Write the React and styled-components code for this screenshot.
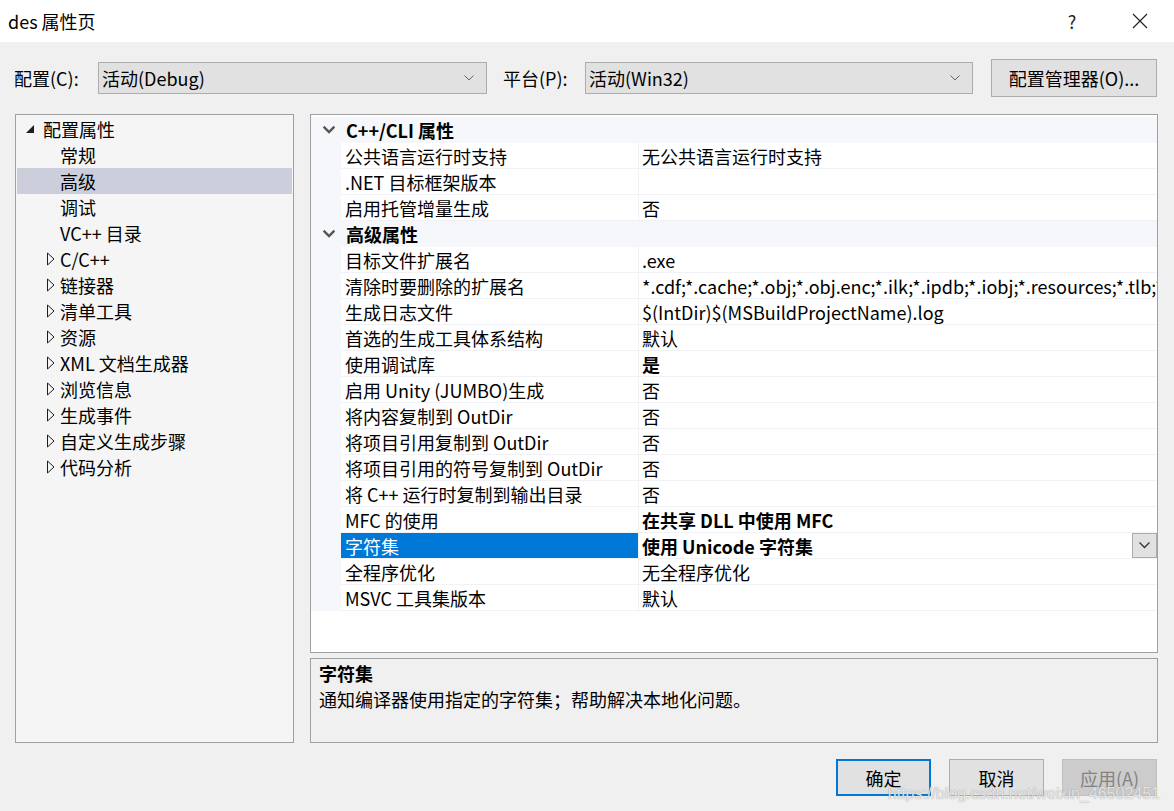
import React from "react";
import styled, { createGlobalStyle } from "styled-components";

const GlobalStyle = createGlobalStyle`
  html, body {
    margin: 0;
    padding: 0;
    background: #f0f0f0;
  }
  body {
    font-family: "Noto Sans CJK SC", "Noto Sans", sans-serif;
    font-size: 18px;
    color: #000;
  }
`;

const Window = styled.div`
  position: relative;
  width: 1174px;
  height: 811px;
  display: flex;
  flex-direction: column;
  background: #f0f0f0;
  overflow: hidden;
`;

const TitleBar = styled.div`
  height: 42px;
  display: flex;
  align-items: center;
  justify-content: space-between;
  background: #fff;
  padding-left: 8px;
`;

const Title = styled.div`
  font-size: 18px;
  line-height: 24px;
`;

const TitleButtons = styled.div`
  display: flex;
  align-items: center;
  height: 100%;
`;

const TitleButton = styled.div`
  width: 52px;
  height: 100%;
  display: flex;
  align-items: center;
  justify-content: center;
  font-size: 18px;
  color: #222;
  margin-right: ${(p) => p.$mr || 0}px;
`;

const Toolbar = styled.div`
  height: 72px;
  display: flex;
  align-items: center;
  padding-left: 14px;
`;

const Label = styled.div`
  line-height: 24px;
  width: ${(p) => p.$w}px;
`;

const Select = styled.div`
  width: ${(p) => p.$w}px;
  height: 32px;
  box-sizing: border-box;
  border: 1px solid #adadad;
  background: #e1e1e1;
  display: flex;
  align-items: center;
  justify-content: space-between;
  padding: 0 12px 0 3px;
  margin-right: ${(p) => p.$mr || 0}px;
  line-height: 24px;
`;

const Button = styled.div`
  flex: none;
  width: ${(p) => p.$w || 95}px;
  height: ${(p) => p.$h || 37}px;
  box-sizing: border-box;
  display: flex;
  align-items: center;
  justify-content: center;
  background: ${(p) => (p.$disabled ? "#cccccc" : "#e1e1e1")};
  color: ${(p) => (p.$disabled ? "#838383" : "#000")};
  border: ${(p) =>
    p.$primary ? "2px solid #0078d7" : p.$disabled ? "1px solid #bfbfbf" : "1px solid #adadad"};
  line-height: 24px;
`;

const Content = styled.div`
  height: 629px;
  display: flex;
  gap: 16px;
  padding: 0 16px 0 15px;
`;

const TreePanel = styled.div`
  flex: none;
  width: 279px;
  box-sizing: border-box;
  border: 1px solid #a0a0a0;
  background: #f5f5f5;
  padding-top: 1px;
  white-space: nowrap;
`;

const TreeItem = styled.div`
  height: 26px;
  display: flex;
  align-items: center;
  line-height: 24px;
  padding-left: ${(p) => p.$indent}px;
  margin: 0 1px;
  background: ${(p) => (p.$selected ? "#cccedb" : "transparent")};
`;

const Expander = styled.span`
  flex: none;
  width: ${(p) => p.$w}px;
  display: inline-flex;
  align-items: center;
`;

const RightColumn = styled.div`
  flex: 1;
  min-width: 0;
  display: flex;
  flex-direction: column;
  gap: 5px;
`;

const Grid = styled.div`
  height: 539px;
  box-sizing: border-box;
  border: 1px solid #a0a0a0;
  background: #fff;
  padding-top: 2px;
  overflow: hidden;
`;

const CategoryRow = styled.div`
  height: 26px;
  display: flex;
  align-items: center;
  background: #f5f7fa;
  font-weight: bold;
  line-height: 24px;
`;

const CategoryToggle = styled.span`
  width: 35px;
  display: inline-flex;
  justify-content: center;
  align-items: center;
`;

const PropRow = styled.div`
  height: 26px;
  display: flex;
  background: #f5f7fa;
`;

const NameCell = styled.div`
  flex: none;
  width: 298px;
  margin-left: 30px;
  box-sizing: border-box;
  padding-left: 4px;
  display: flex;
  align-items: center;
  line-height: 24px;
  white-space: nowrap;
  border-bottom: 1px solid #f0f2f6;
  border-right: 1px solid #f0f2f6;
  background: ${(p) => (p.$selected ? "#0078d7" : "#fff")};
  color: ${(p) => (p.$selected ? "#fff" : "#000")};
`;

const ValueCell = styled.div`
  flex: 1;
  min-width: 0;
  box-sizing: border-box;
  padding-left: 3px;
  display: flex;
  align-items: center;
  justify-content: space-between;
  line-height: 24px;
  white-space: nowrap;
  overflow: hidden;
  background: #fff;
  border-bottom: 1px solid #f0f2f6;
  font-weight: ${(p) => (p.$bold ? "bold" : "normal")};
`;

const ValueText = styled.span`
  overflow: hidden;
  min-width: 0;
`;

const DropButton = styled.div`
  flex: none;
  width: 25px;
  height: 25px;
  box-sizing: border-box;
  border: 1px solid #adadad;
  background: #e1e1e1;
  display: flex;
  align-items: center;
  justify-content: center;
`;

const Description = styled.div`
  flex: 1;
  box-sizing: border-box;
  border: 1px solid #a0a0a0;
  background: #f0f0f0;
  padding: 1px 8px;
  line-height: 26px;
`;

const DescTitle = styled.div`
  font-weight: bold;
`;

const Footer = styled.div`
  flex: 1;
  display: flex;
  justify-content: flex-end;
  align-items: flex-start;
  gap: 18px;
  padding: 16px 17px 0 0;
`;

const Watermark = styled.div`
  position: absolute;
  right: 14px;
  bottom: 8px;
  font-family: "Liberation Sans", Arial, sans-serif;
  font-size: 16px;
  color: rgba(240, 240, 240, 0.9);
  text-shadow: 0 0 1px rgba(100, 100, 100, 0.7);
  pointer-events: none;
`;

const Chevron = ({ size = 10, color = "#444", width = 1.2 }) => (
  <svg width={size} height={size * 0.6} viewBox="0 0 10 6">
    <polyline points="0.5,0.5 5,5 9.5,0.5" fill="none" stroke={color} strokeWidth={width} />
  </svg>
);

const CloseIcon = () => (
  <svg width="16" height="16" viewBox="0 0 16 16">
    <path d="M1 1 L15 15 M15 1 L1 15" stroke="#222" strokeWidth="1.2" />
  </svg>
);

const ExpandedArrow = () => (
  <svg width="10" height="10" viewBox="0 0 10 10">
    <polygon points="9,1 9,9 1,9" fill="#1e1e1e" />
  </svg>
);

const CollapsedArrow = () => (
  <svg width="8" height="14" viewBox="0 0 8 14">
    <polygon points="0.5,1 7,7 0.5,13" fill="none" stroke="#1e1e1e" strokeWidth="1" />
  </svg>
);

const treeItems = [
  { label: "配置属性", level: 0, expanded: true },
  { label: "常规", level: 1 },
  { label: "高级", level: 1, selected: true },
  { label: "调试", level: 1 },
  { label: "VC++ 目录", level: 1 },
  { label: "C/C++", level: 1, collapsed: true },
  { label: "链接器", level: 1, collapsed: true },
  { label: "清单工具", level: 1, collapsed: true },
  { label: "资源", level: 1, collapsed: true },
  { label: "XML 文档生成器", level: 1, collapsed: true },
  { label: "浏览信息", level: 1, collapsed: true },
  { label: "生成事件", level: 1, collapsed: true },
  { label: "自定义生成步骤", level: 1, collapsed: true },
  { label: "代码分析", level: 1, collapsed: true },
];

const categories = [
  {
    title: "C++/CLI 属性",
    rows: [
      { name: "公共语言运行时支持", value: "无公共语言运行时支持" },
      { name: ".NET 目标框架版本", value: "" },
      { name: "启用托管增量生成", value: "否" },
    ],
  },
  {
    title: "高级属性",
    rows: [
      { name: "目标文件扩展名", value: ".exe" },
      {
        name: "清除时要删除的扩展名",
        value:
          "*.cdf;*.cache;*.obj;*.obj.enc;*.ilk;*.ipdb;*.iobj;*.resources;*.tlb;*.tli;*.tlh;*.tmp;*.rsp;*.pgc;*.pgd;*.meta;*.tlog;*.manifest;*.res;*.pch;*.exp;*.idb;*.rep;*.xdc;*.pdb",
      },
      { name: "生成日志文件", value: "$(IntDir)$(MSBuildProjectName).log" },
      { name: "首选的生成工具体系结构", value: "默认" },
      { name: "使用调试库", value: "是", bold: true },
      { name: "启用 Unity (JUMBO)生成", value: "否" },
      { name: "将内容复制到 OutDir", value: "否" },
      { name: "将项目引用复制到 OutDir", value: "否" },
      { name: "将项目引用的符号复制到 OutDir", value: "否" },
      { name: "将 C++ 运行时复制到输出目录", value: "否" },
      { name: "MFC 的使用", value: "在共享 DLL 中使用 MFC", bold: true },
      { name: "字符集", value: "使用 Unicode 字符集", bold: true, selected: true },
      { name: "全程序优化", value: "无全程序优化" },
      { name: "MSVC 工具集版本", value: "默认" },
    ],
  },
];

export default function App() {
  return (
    <Window>
      <GlobalStyle />
      <TitleBar>
        <Title>des 属性页</Title>
        <TitleButtons>
          <TitleButton $mr={16}>?</TitleButton>
          <TitleButton $mr={8}>
            <CloseIcon />
          </TitleButton>
        </TitleButtons>
      </TitleBar>

      <Toolbar>
        <Label $w={84}>配置(C):</Label>
        <Select $w={389} $mr={16}>
          <span>活动(Debug)</span>
          <Chevron size={10} color="#666" width={1} />
        </Select>
        <Label $w={82}>平台(P):</Label>
        <Select $w={388} $mr={18}>
          <span>活动(Win32)</span>
          <Chevron size={10} color="#666" width={1} />
        </Select>
        <Button $w={166} $h={38}>配置管理器(O)...</Button>
      </Toolbar>

      <Content>
        <TreePanel>
          {treeItems.map((item) => (
            <TreeItem
              key={item.label}
              $indent={item.level === 0 ? 8 : 30}
              $selected={item.selected}
            >
              {item.level === 0 ? (
                <Expander $w={18}>
                  <ExpandedArrow />
                </Expander>
              ) : (
                <Expander $w={13}>{item.collapsed && <CollapsedArrow />}</Expander>
              )}
              <span>{item.label}</span>
            </TreeItem>
          ))}
        </TreePanel>

        <RightColumn>
          <Grid>
            {categories.map((cat) => (
              <React.Fragment key={cat.title}>
                <CategoryRow>
                  <CategoryToggle>
                    <Chevron size={12} color="#555" width={2} />
                  </CategoryToggle>
                  <span>{cat.title}</span>
                </CategoryRow>
                {cat.rows.map((row) => (
                  <PropRow key={row.name}>
                    <NameCell $selected={row.selected}>{row.name}</NameCell>
                    <ValueCell $bold={row.bold}>
                      <ValueText>{row.value}</ValueText>
                      {row.selected && (
                        <DropButton>
                          <Chevron size={11} color="#333" width={1.2} />
                        </DropButton>
                      )}
                    </ValueCell>
                  </PropRow>
                ))}
              </React.Fragment>
            ))}
          </Grid>
          <Description>
            <DescTitle>字符集</DescTitle>
            <div>通知编译器使用指定的字符集；帮助解决本地化问题。</div>
          </Description>
        </RightColumn>
      </Content>

      <Footer>
        <Button $primary>确定</Button>
        <Button>取消</Button>
        <Button $disabled>应用(A)</Button>
      </Footer>
      <Watermark>https://blog.csdn.net/weixin_46502451</Watermark>
    </Window>
  );
}
